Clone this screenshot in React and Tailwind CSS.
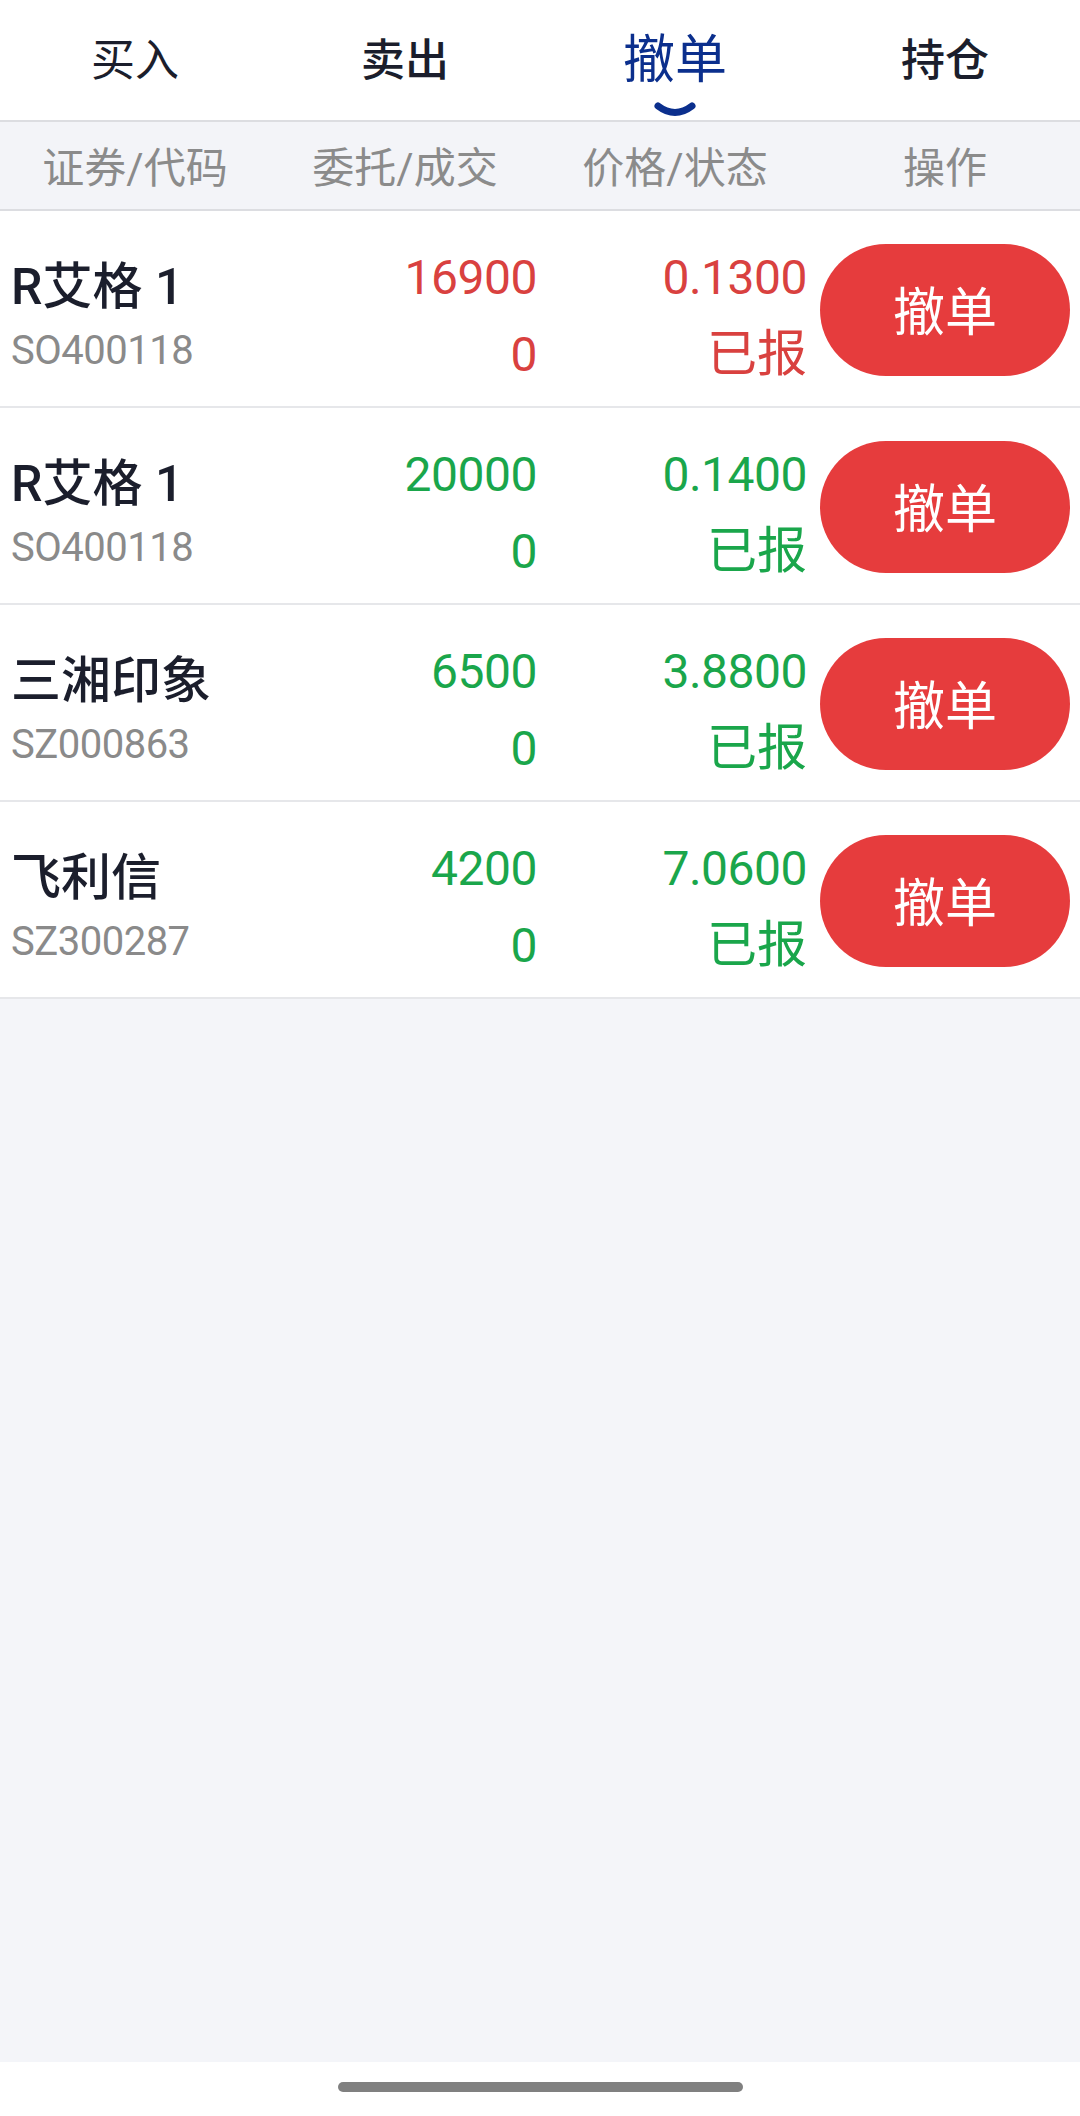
import React from 'react';

const tabs = [
  { label: '买入', weight: 'font-normal' },
  { label: '卖出', weight: 'font-medium' },
  { label: '撤单', active: true },
  { label: '持仓', weight: 'font-medium' },
];

const orders = [
  { name: 'R艾格 1', code: 'SO400118', qty: '16900', deal: '0', price: '0.1300', status: '已报', up: true },
  { name: 'R艾格 1', code: 'SO400118', qty: '20000', deal: '0', price: '0.1400', status: '已报' },
  { name: '三湘印象', code: 'SZ000863', qty: '6500', deal: '0', price: '3.8800', status: '已报' },
  { name: '飞利信', code: 'SZ300287', qty: '4200', deal: '0', price: '7.0600', status: '已报' },
];

const OrderRow = ({ order }) => {
  const tone = order.up ? 'text-[#d9413f]' : 'text-[#1aa64b]';
  return (
    <div className="flex items-start h-[197px] pl-[11px] pr-[10px] bg-white border-b-2 border-[#e6e7ea]">
      <div className="w-[329px] pt-[46px]">
        <div className="text-[50px] leading-[60px] font-medium text-[#1b1e2c] whitespace-nowrap">{order.name}</div>
        <div className="mt-[9px] text-[40px] leading-[50px] text-[#8a8a8a] tracking-[-0.5px]">{order.code}</div>
      </div>
      <div className={`w-[197px] pt-[28px] text-right text-[48px] leading-[77px] tracking-[-0.5px] ${tone}`}>
        <div>{order.qty}</div>
        <div>{order.deal}</div>
      </div>
      <div className={`w-[270px] pt-[28px] text-right leading-[77px] ${tone}`}>
        <div className="text-[48px] tracking-[-0.5px]">{order.price}</div>
        <div className="text-[50px]">{order.status}</div>
      </div>
      <button className="ml-[13px] mt-[33px] w-[250px] h-[132px] pt-[8px] rounded-full bg-[#e63c3d] text-white text-[52px] leading-none flex items-center justify-center">
        撤单
      </button>
    </div>
  );
};

export default function App() {
  return (
    <div className="min-h-[2116px] flex flex-col bg-[#f4f5f9]" style={{ fontFamily: 'Roboto, "Noto Sans CJK SC", sans-serif' }}>
      <nav className="grid grid-cols-4 h-[120px] bg-white">
        {tabs.map((t) => (
          <div key={t.label} className="flex flex-col items-center pt-[30px]">
            {t.active ? (
              <>
                <span className="text-[52px] leading-[62px] text-[#0b2f8d]">{t.label}</span>
                <svg className="mt-[10px]" width="44" height="15" viewBox="0 0 44 15">
                  <path d="M5 4 Q22 17 39 4" fill="none" stroke="#0b2f8d" strokeWidth="7" strokeLinecap="round" />
                </svg>
              </>
            ) : (
              <span className={`text-[44px] leading-[62px] text-[#1b1e2c] ${t.weight}`}>{t.label}</span>
            )}
          </div>
        ))}
      </nav>

      <div className="grid grid-cols-4 h-[91px] items-center pt-[6px] bg-[#f3f4f8] border-y-2 border-[#dcdde1] text-[42px] text-[#8b8b8b]">
        <div className="text-center">证券/代码</div>
        <div className="text-center">委托/成交</div>
        <div className="text-center">价格/状态</div>
        <div className="text-center">操作</div>
      </div>

      <main className="flex-1">
        {orders.map((o, i) => (
          <OrderRow key={i} order={o} />
        ))}
      </main>

      <footer className="h-[54px] bg-white flex justify-center pt-[20px]">
        <div className="w-[405px] h-[10px] rounded-full bg-[#808080]" />
      </footer>
    </div>
  );
}
